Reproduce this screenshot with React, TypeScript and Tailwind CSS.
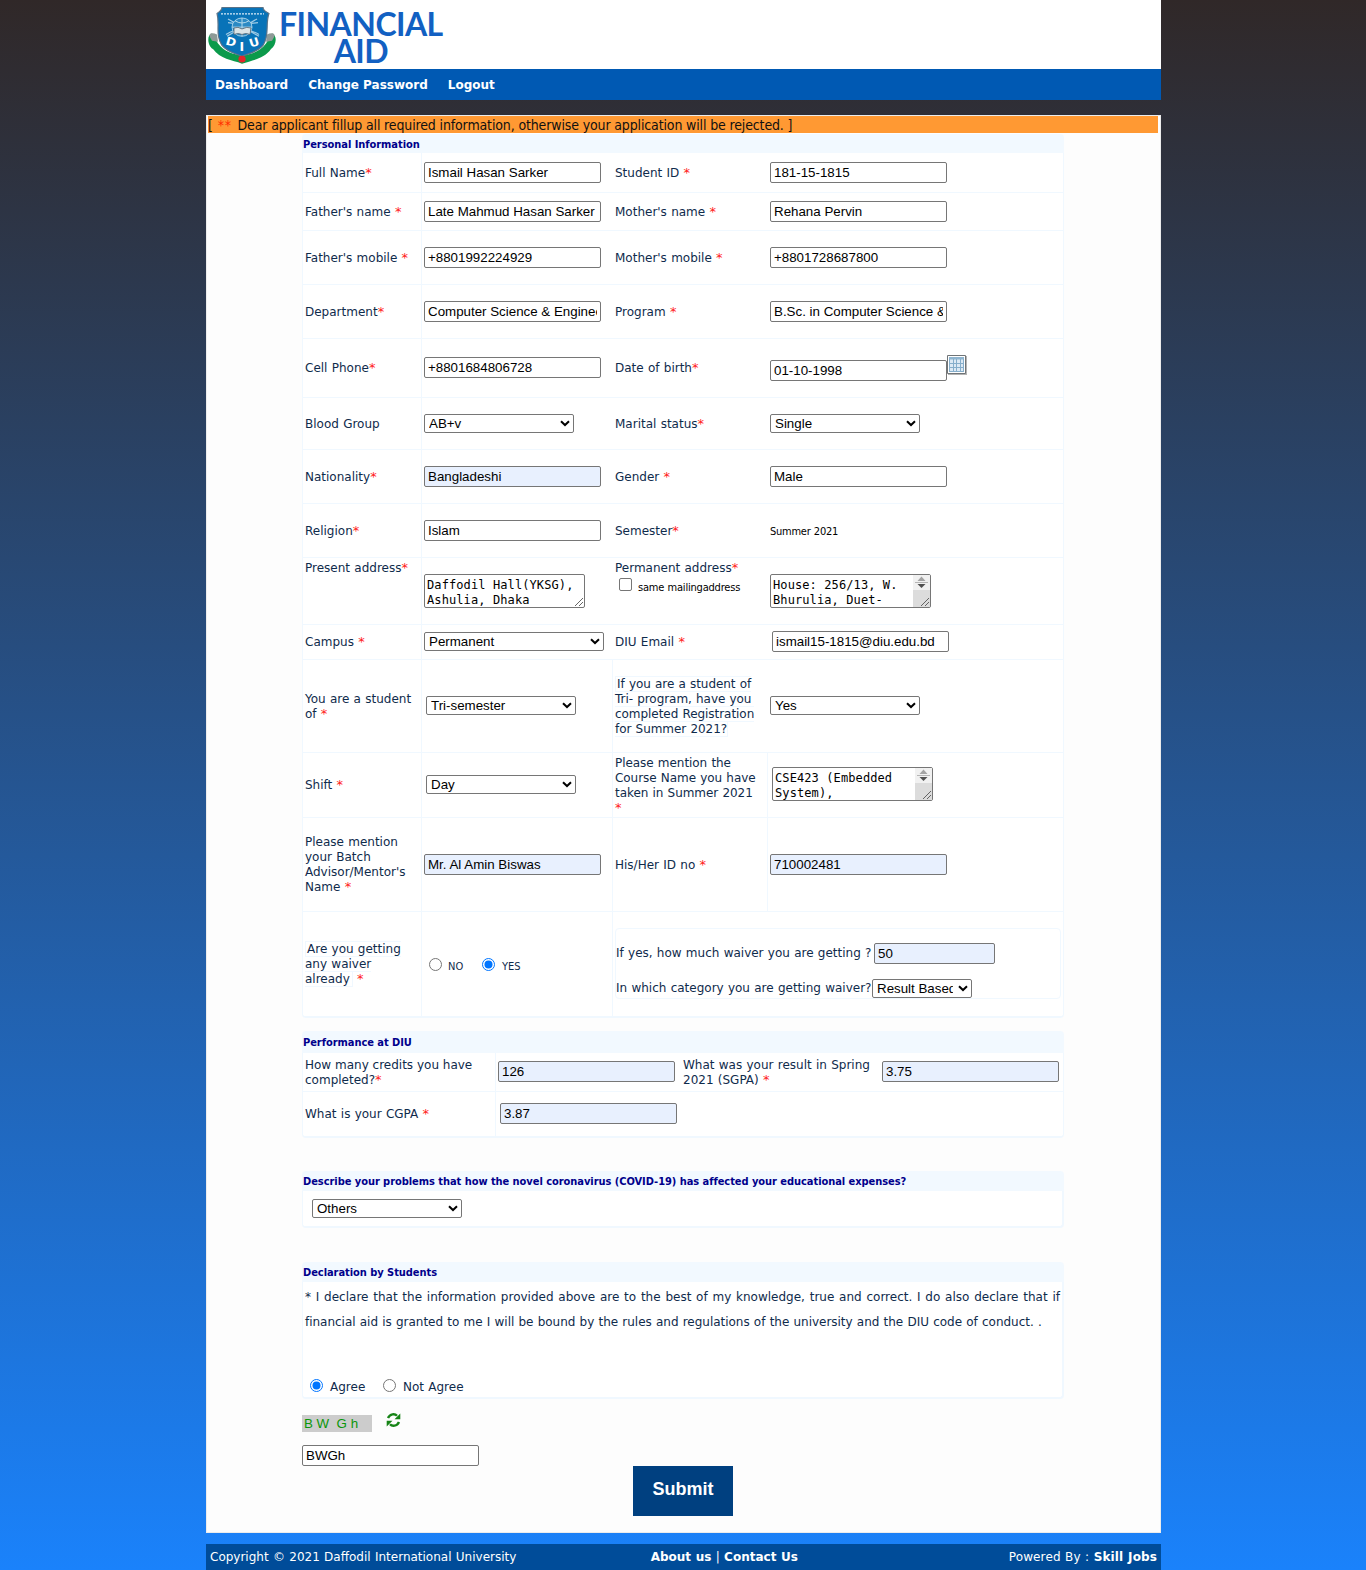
import React from "react";

const VERDANA = "font-['DejaVu_Sans',sans-serif]";
const TAHOMA = "font-['DejaVu_Sans_Condensed','DejaVu_Sans',sans-serif] [font-stretch:condensed]";

function Star() {
  return <span className="inline-block w-[7.500px] font-['DejaVu_Sans',sans-serif] text-[13px] leading-[12px] text-[#ff1a1a]">*</span>;
}

function Field({ value, filled = false, className = "w-[177px]" }: { value: string; filled?: boolean; className?: string }) {
  return (
    <input
      type="text"
      defaultValue={value}
      className={`block h-[21px] shrink-0 rounded-[2px] border border-[#767676] px-[3px] font-['Liberation_Sans',sans-serif] text-[13.333px] leading-[17px] text-black outline-none ${filled ? "bg-[#e8f0fe]" : "bg-white"} ${className}`}
    />
  );
}

function Select({ value, className = "w-[150px]" }: { value: string; className?: string }) {
  return (
    <span className={`relative block h-[19px] shrink-0 ${className}`}>
      <select className="block h-[19px] w-full appearance-none overflow-hidden rounded-[2px] border border-[#767676] bg-white pr-[18px] pl-[4px] font-['Liberation_Sans',sans-serif] text-[13.333px] leading-[17px] text-black outline-none">
        <option>{value}</option>
      </select>
      <svg className="pointer-events-none absolute top-[6px] right-[4px]" width="10" height="7" viewBox="0 0 10 7" fill="none">
        <path d="M1 1.2 L5 5 L9 1.2" stroke="#000" strokeWidth="2" />
      </svg>
    </span>
  );
}

function Area({ value, scroll = false }: { value: string; scroll?: boolean }) {
  return (
    <span className="relative block h-[34px] w-[161px] shrink-0">
      <textarea
        defaultValue={value}
        className="block h-[34px] w-[161px] resize-none overflow-hidden rounded-[2px] border border-[#767676] bg-white px-[2px] pt-[3px] font-['DejaVu_Sans_Mono',monospace] text-[12px] leading-[15px] tracking-[0.1px] whitespace-pre text-black outline-none"
      />
      {scroll && (
        <svg className="absolute top-px right-px" width="17" height="32" viewBox="0 0 17 32">
          <path d="M0 0h17v15H0z" fill="#f1f1f1" />
          <path d="M0 15h17v17H0z" fill="#dcdcdc" />
          <path d="M8.500 1.500 L12.500 6 H4.500z" fill="#a3a3a3" />
          <path d="M2 7.500 H15" stroke="#b5b5b5" />
          <path d="M4.500 9 H12.500 L8.500 13z" fill="#505050" />
        </svg>
      )}
      <svg className="absolute right-[2px] bottom-[2px]" width="8" height="8" viewBox="0 0 8 8">
        <path d="M0 8 L8 0 M4 8 L8 4" stroke="#555" strokeWidth="0.9" />
      </svg>
    </span>
  );
}

function Radio({ checked = false }: { checked?: boolean }) {
  return (
    <svg className="block shrink-0" width="13" height="13" viewBox="0 0 13 13" role="radio" aria-checked={checked}>
      <circle cx="6.500" cy="6.500" r="6" fill="#fff" stroke={checked ? "#0075ff" : "#767676"} />
      {checked && <circle cx="6.500" cy="6.500" r="4" fill="#0075ff" />}
    </svg>
  );
}

type RowProps = {
  h: string;
  a: React.ReactNode;
  b: React.ReactNode;
  c: React.ReactNode;
  d: React.ReactNode;
  line3?: boolean;
  line4?: boolean;
  align?: string;
  lift?: string;
};

function Row({ h, a, b, c, d, line3 = false, line4 = false, align = "items-center", lift = "" }: RowProps) {
  return (
    <div className={`grid grid-cols-[119px_191px_155px_295px] border-b border-[#f0f8ff] ${h}`}>
      <div className={`flex border-r border-[#f0f8ff] pl-[2px] ${align}`}>{a}</div>
      <div className={`flex border-r pl-[2px] ${line3 ? "border-[#f0f8ff]" : "border-transparent"} ${align} ${lift}`}>{b}</div>
      <div className={`flex border-r pl-[2px] ${line4 ? "border-[#f0f8ff]" : "border-transparent"} ${align}`}>{c}</div>
      <div className={`flex pl-[2px] ${align} ${lift}`}>{d}</div>
    </div>
  );
}

function Label({ children, req = true, gap = false, className = "pt-px" }: { children: React.ReactNode; req?: boolean; gap?: boolean; className?: string }) {
  return (
    <span className={`block whitespace-nowrap ${className}`}>
      {children}
      {gap && " "}
      {req && <Star />}
    </span>
  );
}

function Legend({ children, className }: { children: React.ReactNode; className: string }) {
  return (
    <h2 className={`flex items-center rounded-t-[4px] bg-[#f2f9ff] pt-[3px] pl-[1px] text-[11px] font-bold tracking-[-0.05px] whitespace-nowrap text-[#00008b] ${TAHOMA} ${className}`}>
      {children}
    </h2>
  );
}

const BODY = "rounded-b-[4px] border border-t-0 border-[#f0f8ff] bg-white text-[12px] leading-[15px] text-[#0f2b4c] [word-spacing:0.45px]";

function Logo() {
  return (
    <div className="flex h-[62px] w-[236px]">
      <svg className="block shrink-0" width="69" height="58" viewBox="0 0 69 63.4" preserveAspectRatio="none">
        <path d="M4 29 C-2 31 0 43 5 46 C12 57 24 58 34 62 C44 58 56 57 63 46 C68 42 70 32 64 29 L58 40 C52 49 42 52 34 53 C26 52 16 49 10 40 Z" fill="#0b9a4b" />
        <path d="M2 33 C0 28 5 28 9 30 L10 38 L4 37z M66 33 C68 28 63 28 59 30 L58 38 L64 37z" fill="#8e9a97" />
        <path d="M9 7 C12 5 14 3 14 0.600 H55 C55 3 57 5 61 7 C57 19 62 30 55 42 C49 50 39 51 34 54 C29 51 20 50 14 42 C7 30 12 19 9 7Z" fill="#0873b8" stroke="#5b7388" strokeWidth="1.200" />
        <path d="M13 7.500 H56" stroke="#d8ecf7" strokeWidth="1.600" strokeDasharray="2 1" />
        <path d="M20 13 L51 32 M49 13 L19 32 M20 17 Q34 20 50 17 M18 30 Q34 19 51 30" stroke="#9fcbe5" strokeWidth="1.300" fill="none" />
        <circle cx="34" cy="22" r="10" fill="#2b8ac4" stroke="#a6d1e8" />
        <path d="M24 22 H44 M34 12 V32 M27 15 Q34 20 41 15" stroke="#b9dced" fill="none" />
        <path d="M26 23 Q30 21 34 24 Q39 21 43 23 L42 30 Q38 28 34 30 Q30 28 26 30Z" fill="#dbe4e6" stroke="#54606a" strokeWidth=".8" />
        <g fill="#fff" fontFamily="DejaVu Sans, sans-serif" fontWeight="700" fontSize="12.5">
          <text x="18" y="42" transform="rotate(14 22 37)">D</text>
          <text x="31.500" y="48">I</text>
          <text x="41" y="43" transform="rotate(-16 46 38)">U</text>
        </g>
        <circle cx="34" cy="57" r="3.600" fill="#e3262b" />
      </svg>
      <div className="flex flex-col items-center pt-[3px] pl-[2px] font-['Lato',sans-serif] text-[32px] leading-[27px] font-bold text-[#1260c2]">
        <span className="block h-[27px] tracking-[-0.55px] whitespace-nowrap">FINANCIAL</span>
        <span className="block h-[27px] tracking-[-0.6px]">AID</span>
      </div>
    </div>
  );
}

function CalendarIcon() {
  return (
    <svg className="block" width="20" height="20" viewBox="0 0 20 20">
      <path d="M1 1h19v19H1z" fill="#b4b4b4" />
      <path d="M.5 .5h18v18H.5z" fill="#fff" stroke="#6f7477" />
      <path d="M2 2h15v15H2z" fill="#dce9f4" />
      <path d="M2 2h15v2.500H2z" fill="#8fb5d0" />
      <path d="M2 8.500h15M2 12.500h15M6.500 4v13M9.500 4v13M13.500 4v13M2.500 4v13M16.500 4v13M2 16.500h15" stroke="#86aecb" />
    </svg>
  );
}

function RefreshIcon() {
  return (
    <svg className="block" width="15" height="14" viewBox="0 0 15 14">
      <path d="M2 5 C4 0.500 9 0.500 11 2.800 M13 9 C11 13.500 6 13.500 4 11.200" fill="none" stroke="#168416" strokeWidth="2.400" />
      <path d="M14.300 0.500 V6.300 H8.500z M0.700 13.500 V7.700 H6.500z" fill="#168416" />
    </svg>
  );
}

export default function App() {
  return (
    <div className={`h-[1570px] w-[1366px] overflow-hidden bg-[linear-gradient(to_bottom,#302828,#1a82fb)] pl-[206px] ${VERDANA}`}>
      <div className="flex w-[955px] flex-col">
        <header className="h-[69px] bg-white pt-[7px] pl-[2px]">
          <Logo />
        </header>
        <nav className="flex h-[31px] items-center gap-[20px] bg-[#0059b3] pl-[9px] text-[12px] font-bold whitespace-nowrap text-white">
          <a>Dashboard</a>
          <a>Change Password</a>
          <a>Logout</a>
        </nav>

        <main className="mt-[15px] flex h-[1418px] flex-col border border-[#ececec] bg-[#fdfdfd]">
          <p className={`mr-[2px] ml-px h-[17px] bg-[#ff9933] text-[14px] leading-[18px] tracking-[-0.14px] whitespace-nowrap text-[#111] ${TAHOMA}`}>
            [ <span className="inline-block w-[17px] pl-px tracking-[0.8px] text-[#ff2a00]">**</span> Dear applicant fillup all required information, otherwise your application will be rejected. ]
          </p>

          <form className="ml-[95px] flex w-[762px] flex-col">
            <section className="mt-px">
              <Legend className="h-[19px]">Personal Information</Legend>
              <div className={`${BODY} h-[865px] border-b-2`}>
                <Row h="h-[40px]" a={<Label>Full Name</Label>} b={<Field value="Ismail Hasan Sarker" />} c={<Label gap>Student ID</Label>} d={<Field value="181-15-1815" />} />
                <Row h="h-[38px]" a={<Label gap>Father's name</Label>} b={<Field value="Late Mahmud Hasan Sarker" />} c={<Label gap>Mother's name</Label>} d={<Field value="Rehana Pervin" />} />
                <Row h="h-[54px]" a={<Label gap>Father's mobile</Label>} b={<Field value="+8801992224929" />} c={<Label gap>Mother's mobile</Label>} d={<Field value="+8801728687800" />} />
                <Row h="h-[54px]" a={<Label>Department</Label>} b={<Field value="Computer Science & Engineering" />} c={<Label gap>Program</Label>} d={<Field value="B.Sc. in Computer Science & Engineering" />} />
                <Row
                  h="h-[59px]"
                  a={<Label className="">Cell Phone</Label>}
                  b={
                    <div className="pb-[2px]">
                      <Field value="+8801684806728" />
                    </div>
                  }
                  c={<Label className="">Date of birth</Label>}
                  d={
                    <div className="flex items-start">
                      <div className="pt-[5px]">
                        <Field value="01-10-1998" />
                      </div>
                      <CalendarIcon />
                    </div>
                  }
                />
                <Row h="h-[52px]" a={<Label req={false}>Blood Group</Label>} b={<Select value="AB+v" />} c={<Label>Marital status</Label>} d={<Select value="Single" />} />
                <Row h="h-[54px]" a={<Label>Nationality</Label>} b={<Field filled value="Bangladeshi" />} c={<Label gap>Gender</Label>} d={<Field value="Male" />} />
                <Row h="h-[54px]" a={<Label>Religion</Label>} b={<Field value="Islam" />} c={<Label>Semester</Label>} d={<span className={`pt-[2px] text-[11px] tracking-[-0.25px] text-black ${TAHOMA}`}>Summer 2021</span>} />
                <Row
                  h="h-[67px]"
                  align="items-start pt-[2px]"
                  a={<Label>Present address</Label>}
                  b={
                    <div className="pt-[14px]">
                      <Area value={"Daffodil Hall(YKSG),\nAshulia, Dhaka"} />
                    </div>
                  }
                  c={
                    <div>
                      <Label>Permanent address</Label>
                      <label className="flex gap-[6px] pt-[2px] pl-[4px]">
                        <span className="block h-[13px] w-[13px] rounded-[2px] border border-[#767676] bg-white" />
                        <span className={`pt-[2px] text-[11px] tracking-[-0.2px] whitespace-nowrap text-black ${TAHOMA}`}>same mailingaddress</span>
                      </label>
                    </div>
                  }
                  d={
                    <div className="pt-[14px]">
                      <Area scroll value={"House: 256/13, W.\nBhurulia, Duet-"} />
                    </div>
                  }
                />
                <Row h="h-[35px]" lift="pb-px" a={<Label gap className="">Campus</Label>} b={<Select value="Permanent" className="w-[180px]" />} c={<Label gap className="">DIU Email</Label>} d={<Field value="ismail15-1815@diu.edu.bd" className="ml-[2px] w-[177px]" />} />
                <Row
                  h="h-[93px]"
                  line3
                  lift="pb-px"
                  a={<span className="pt-px whitespace-nowrap">You are a student<br />of <Star /></span>}
                  b={<Select value="Tri-semester" className="ml-[2px] w-[150px]" />}
                  c={
                    <span className="pt-px tracking-[-0.05px] whitespace-nowrap">
                      <span className="border border-[#f0f8ff] pl-px">If you are a student of<br />Tri- program, have you<br />completed Registration<br />for Summer 2021?</span>
                    </span>
                  }
                  d={<Select value="Yes" />}
                />
                <Row
                  h="h-[65px]"
                  line3
                  line4
                  lift="pb-[2px]"
                  a={<Label gap className="">Shift</Label>}
                  b={<Select value="Day" className="ml-[2px] w-[150px]" />}
                  c={<span className="pt-px tracking-[-0.05px] whitespace-nowrap">Please mention the<br />Course Name you have<br />taken in Summer 2021<br /><Star /></span>}
                  d={
                    <div className="pl-[2px]">
                      <Area scroll value={"CSE423 (Embedded\nSystem),"} />
                    </div>
                  }
                />
                <Row
                  h="h-[94px]"
                  line3
                  line4
                  a={<span className="whitespace-nowrap">Please mention<br />your Batch<br />Advisor/Mentor's<br />Name <Star /></span>}
                  b={<Field filled value="Mr. Al Amin Biswas" />}
                  c={<Label gap>His/Her ID no</Label>}
                  d={<Field filled value="710002481" />}
                />
                <div className="grid h-[104px] grid-cols-[119px_191px_450px]">
                  <div className="flex items-center border-r border-[#f0f8ff] pl-[2px] whitespace-nowrap">
                    <span>
                      <span className="border border-[#f0f8ff] pr-[2px] pl-px">Are you getting<br />any waiver<br />already</span> <Star />
                    </span>
                  </div>
                  <div className={`flex items-center border-r border-[#f0f8ff] pl-[7px] text-[11px] text-[#0f2b4c] ${TAHOMA}`}>
                    <Radio />
                    <span className="w-[33px] pt-[5px] pl-[6px]">NO</span>
                    <span className="pl-[7px]">
                      <Radio checked />
                    </span>
                    <span className="pt-[5px] pl-[7px]">YES</span>
                  </div>
                  <div className="px-[2px] pt-[16px]">
                    <div className="h-[71px] rounded-[4px] border border-[#f0f8ff] pt-[14px] whitespace-nowrap">
                      <div className="flex h-[21px] items-center justify-start">
                        <span className="w-[258px]">If yes, how much waiver you are getting ?</span>
                        <Field filled value="50" className="w-[121px]" />
                      </div>
                      <div className="mt-[15px] flex h-[19px] items-center">
                        <span className="w-[256px]">In which category you are getting waiver?</span>
                        <Select value="Result Based" className="w-[100px]" />
                      </div>
                    </div>
                  </div>
                </div>
              </div>
            </section>

            <section className="mt-[13px]">
              <Legend className="h-[22px]">Performance at DIU</Legend>
              <div className={`${BODY} border-b-2`}>
                <div className="grid h-[39px] grid-cols-[193px_185px_199px_1fr] items-center border-b border-[#f0f8ff] whitespace-nowrap">
                  <div className="flex h-full items-center border-r border-[#f0f8ff] pt-px pl-[2px] [word-spacing:0]"><span>How many credits you have<br />completed?<Star /></span></div>
                  <div className="pb-[2px] pl-[2px]"><Field filled value="126" /></div>
                  <div className="pt-px pl-[2px]">What was your result in Spring<br />2021 (SGPA) <Star /></div>
                  <div className="pb-[2px] pl-[2px]"><Field filled value="3.75" /></div>
                </div>
                <div className="grid h-[44px] grid-cols-[193px_1fr] items-center">
                  <div className="flex h-full items-center border-r border-[#f0f8ff] pl-[2px]"><Label gap className="">What is your CGPA</Label></div>
                  <div className="pb-[2px] pl-[4px]"><Field filled value="3.87" /></div>
                </div>
              </div>
            </section>

            <section className="mt-[33px]">
              <Legend className="h-[20px]">Describe your problems that how the novel coronavirus (COVID-19) has affected your educational expenses?</Legend>
              <div className={`${BODY} h-[37px] border-r-2 border-b-2 pt-[8px] pl-[9px]`}>
                <Select value="Others" />
              </div>
            </section>

            <section className="mt-[34px]">
              <Legend className="h-[20px]">Declaration by Students</Legend>
              <div className={`${BODY} h-[117px] border-r-2 border-b-2 pt-[3px] pl-[2px]`}>
                <p className="leading-[25px] whitespace-nowrap">
                  <span className="block w-[755px] [text-align-last:justify]">* I declare that the information provided above are to the best of my knowledge, true and correct. I do also declare that if</span>
                  <span className="tracking-[-0.025px]">financial aid is granted to me I will be bound by the rules and regulations of the university and the DIU code of conduct. .</span>
                </p>
                <div className="mt-[40px] flex items-center pl-[5px] whitespace-nowrap">
                  <Radio checked />
                  <span className="w-[60px] pt-[5px] pl-[7px]">Agree</span>
                  <Radio />
                  <span className="pt-[5px] pl-[7px]">Not Agree</span>
                </div>
              </div>
            </section>

            <div className="mt-[14px] flex">
              <div className="mt-[2px] h-[17px] w-[70px] bg-[#cccccc] pl-[2px] font-['Liberation_Sans',sans-serif] text-[13.333px] leading-[17px] whitespace-pre text-[#0a960a]">B W  G h</div>
              <div className="pl-[14px]">
                <RefreshIcon />
              </div>
            </div>
            <div className="mt-[13px]">
              <Field value="BWGh" />
            </div>
            <button type="button" className="ml-[331px] h-[50px] w-[100px] bg-[#004080] pb-[4px] font-['Liberation_Sans',sans-serif] text-[18px] font-bold text-white">
              Submit
            </button>
          </form>
        </main>

        <footer className="mt-[11px] grid h-[26px] grid-cols-3 items-center bg-[#004c99] px-[4px] text-[12px] [word-spacing:0.5px] whitespace-nowrap text-white">
          <span>Copyright © 2021 Daffodil International University</span>
          <span className="pl-[125px]"><b>About us</b> | <b>Contact Us</b></span>
          <span className="text-right tracking-[0.12px]">Powered By : <b>Skill Jobs</b></span>
        </footer>
      </div>
    </div>
  );
}
